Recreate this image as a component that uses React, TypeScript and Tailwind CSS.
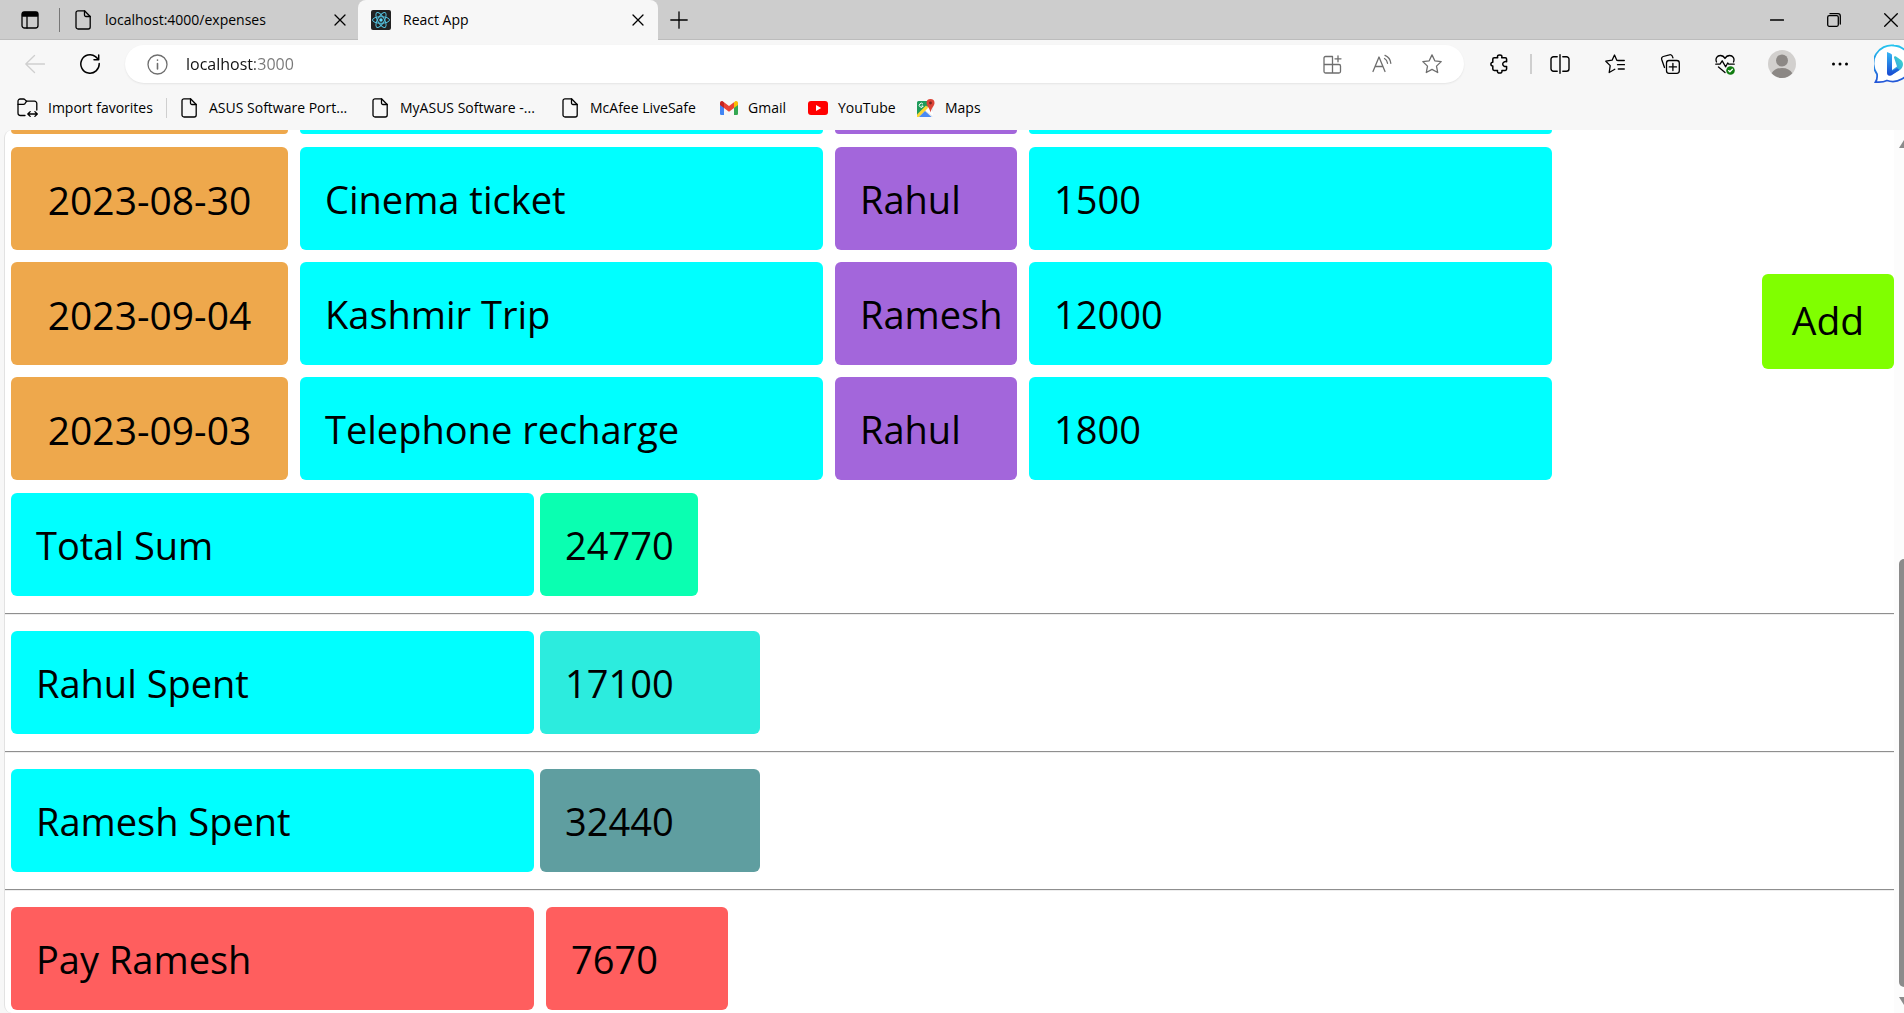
import React from "react";

type IconProps = { className?: string; children: React.ReactNode; box?: string };

function Icon({ className = "size-5", box = "0 0 20 20", children }: IconProps) {
  return (
    <svg
      viewBox={box}
      className={"shrink-0 " + className}
      fill="none"
      stroke="currentColor"
      strokeWidth="1.3"
      strokeLinecap="round"
      strokeLinejoin="round"
      aria-hidden="true"
    >
      {children}
    </svg>
  );
}

const FileIcon = () => (
  <Icon className="h-5 w-4" box="0 0 16 20">
    <path d="M3 .8h6.5L15.2 6.500V17a2 2 0 0 1-2 2H3a2 2 0 0 1-2-2V2.800a2 2 0 0 1 2-2Z" />
    <path d="M9.500 .8V5a1.500 1.500 0 0 0 1.500 1.500h4.200" />
  </Icon>
);

const CloseIcon = () => (
  <Icon className="size-3" box="0 0 12 12">
    <path d="m1 1 10 10M11 1 1 11" />
  </Icon>
);

const STAR = "m10 .9 2.800 5.900 6.400.8-4.700 4.500 1.200 6.400L10 15.400l-5.700 3.100 1.200-6.400L.8 7.600l6.400-.8Z";

const ReactLogo = () => (
  <svg viewBox="0 0 20 20" className="size-5 shrink-0" aria-hidden="true">
    <rect width="20" height="20" rx="2" fill="#222" />
    <g fill="none" stroke="#53c1de" strokeWidth="1">
      <ellipse cx="10" cy="10" rx="8.500" ry="3.300" />
      <ellipse cx="10" cy="10" rx="8.500" ry="3.300" transform="rotate(60 10 10)" />
      <ellipse cx="10" cy="10" rx="8.500" ry="3.300" transform="rotate(120 10 10)" />
    </g>
    <circle cx="10" cy="10" r="1.700" fill="#61dafb" />
  </svg>
);

const ImportIcon = () => (
  <Icon className="h-5 w-[21px]" box="0 0 21 20">
    <path d="M8 17.500H3.500a2.500 2.500 0 0 1-2.500-2.500V3.200A2.200 2.200 0 0 1 3.200 1h3.300c.6 0 1 .2 1.400.6L9.500 3.200h8a2.300 2.300 0 0 1 2.300 2.300V12" />
    <path d="M1 6.300h5.500c.6 0 1-.2 1.400-.6l1.800-2.500M11 16h9M13.200 13.600 10.800 16l2.400 2.400M17.900 13.600l2.400 2.400-2.400 2.400" />
  </Icon>
);

const GmailIcon = () => (
  <svg viewBox="0 0 18 14" className="h-3.5 w-[18px] shrink-0" aria-hidden="true">
    <path d="M0 2.500 4 5.500V14H1.300A1.300 1.300 0 0 1 0 12.700Z" fill="#4285f4" />
    <path d="M18 2.500 14 5.500V14h2.700a1.300 1.300 0 0 0 1.300-1.300Z" fill="#34a853" />
    <path d="M14 1.200 15 .4c1.300-1 3 0 3 1.600v2L14 7Z" fill="#fbbc04" />
    <path d="M4 1.200 3 .4C1.700-.6 0 .4 0 2v2l4 3Z" fill="#c5221f" />
    <path d="M4 1.200 9 5l5-3.800V7L9 10.800 4 7Z" fill="#ea4335" />
  </svg>
);

const YouTubeIcon = () => (
  <svg viewBox="0 0 20 14" className="h-3.5 w-5 shrink-0" aria-hidden="true">
    <rect width="20" height="14" rx="3" fill="#f00" />
    <path d="m8 4 5.200 3L8 10Z" fill="#fff" />
  </svg>
);

const MapsIcon = () => (
  <svg viewBox="0 0 18 19" className="h-[19px] w-[18px] shrink-0" aria-hidden="true">
    <rect y="2" width="16" height="16" rx="1.500" fill="#e8eaed" />
    <path d="M0 3.500A1.500 1.500 0 0 1 1.500 2H12v4L0 18Z" fill="#1e9b5a" />
    <path d="m0 15.500 9-9 2.500 2.500L2 18H0Z" fill="#fdd835" />
    <path d="m8 12 6.500 6H2Z" fill="#4a8af4" />
    <path d="m8.500 11.500 3-3L16 13v4Z" fill="#fff" />
    <path d="M6 5.200A2 2 0 1 0 6.200 7H4.500" fill="none" stroke="#fff" strokeWidth="1" />
    <path d="M13.500 0A4 4 0 0 0 9.500 4c0 3 3 4.500 4 9.500 1-5 4-6.500 4-9.500a4 4 0 0 0-4-4Z" fill="#db4437" />
    <circle cx="13.500" cy="4" r="1.400" fill="#7b231e" />
  </svg>
);

const BingIcon = () => (
  <svg viewBox="0 0 40 40" className="size-10 shrink-0" aria-hidden="true">
    <defs>
      <linearGradient id="bing-ring" x1="0" y1="0" x2="0" y2="1">
        <stop offset="0" stopColor="#25c4ee" />
        <stop offset="1" stopColor="#2356d8" />
      </linearGradient>
      <linearGradient id="bing-stem" x1="0" y1="0" x2="0" y2="1">
        <stop offset="0" stopColor="#35b6f5" />
        <stop offset="1" stopColor="#1747d1" />
      </linearGradient>
      <linearGradient id="bing-bowl" x1="1" y1="0" x2="0" y2="1">
        <stop offset="0" stopColor="#3fe0c8" />
        <stop offset="1" stopColor="#2a7df0" />
      </linearGradient>
    </defs>
    <path
      d="M20 1.500a18 18 0 1 1-7 35c-3 1.500-7 2-11.500 1.500 1.800-2.500 2-4.500 1.500-8A18 18 0 0 1 20 1.500Z"
      fill="#fff"
      stroke="url(#bing-ring)"
      strokeWidth="1.800"
    />
    <path d="M20 13.500c0-1 1-1.500 2-1l5 3.500c3 2.500 2.500 7-.5 9.500L17 31.500l-1-4 7-5Z" fill="url(#bing-bowl)" />
    <path d="m13 8 3.500 1.500c1 .5 1.500 1 1.500 2V27l5-3 2.500 2-8.500 5.500c-2.500 1-4-.5-4-2.500Z" fill="url(#bing-stem)" />
  </svg>
);

function IconButton({ label, className = "w-10", children }: { label: string; className?: string; children: React.ReactNode }) {
  return (
    <button type="button" aria-label={label} className={"flex h-9 shrink-0 items-center justify-center " + className}>
      {children}
    </button>
  );
}

function TabStrip() {
  return (
    <header className="flex h-10 shrink-0 items-center bg-[#cdcdcd] shadow-[inset_0_-1px_0_#bcbcbc]">
      <IconButton label="Tab actions" className="w-[59px]">
        <Icon className="size-[18px]" box="0 0 18 18">
          <rect x="1" y="1" width="16" height="16" rx="2.500" />
          <path d="M1.500 1.500h15V5h-15Z" fill="currentColor" />
          <path d="M6 5v12" />
        </Icon>
      </IconButton>
      <div className="h-6 w-px bg-[#777]" />
      <div className="flex h-10 w-[298px] items-center pr-3 pl-[15px]">
        <FileIcon />
        <span className="ml-3.5 flex-1 truncate">localhost:4000/expenses</span>
        <button type="button" aria-label="Close localhost:4000/expenses">
          <CloseIcon />
        </button>
      </div>
      <div className="z-10 flex h-10 w-[300px] items-center rounded-t-lg bg-[#f7f7f7] pr-3.5 pl-[13px]">
        <ReactLogo />
        <span className="ml-3 flex-1">React App</span>
        <button type="button" aria-label="Close React App">
          <CloseIcon />
        </button>
      </div>
      <IconButton label="New tab" className="w-[42px]">
        <Icon className="size-[18px]" box="0 0 18 18">
          <path d="M9 .8v16.400M.8 9h16.400" />
        </Icon>
      </IconButton>
      <div className="ml-auto flex">
        <IconButton label="Minimize" className="w-[57px]">
          <Icon className="size-[14px]" box="0 0 14 14">
            <path d="M.5 7h13" />
          </Icon>
        </IconButton>
        <IconButton label="Restore" className="w-[57px]">
          <Icon className="size-[14px]" box="0 0 14 14">
            <rect x=".7" y="2.700" width="10.600" height="10.600" rx="1.500" />
            <path d="M3 .7h8A2.300 2.300 0 0 1 13.300 3v8" />
          </Icon>
        </IconButton>
        <IconButton label="Close window" className="w-[42px] pl-4">
          <Icon className="size-[14px]" box="0 0 14 14">
            <path d="m.7.7 12.600 12.600M13.300.7.7 13.300" />
          </Icon>
        </IconButton>
      </div>
    </header>
  );
}

function AddressRow() {
  return (
    <div className="flex h-12 items-center">
      <IconButton label="Back" className="w-[70px] text-[#cfcfcf]">
        <Icon>
          <path d="M19.500 10H.8M9.500 1.500 .8 10l8.700 8.500" />
        </Icon>
      </IconButton>
      <IconButton label="Refresh" className="w-10">
        <Icon>
          <path strokeWidth="1.500" d="M19.200 9.500A9.200 9.200 0 1 1 15.500 2.600L18.500 5.500M18.700 1v4.700h-4.700" />
        </Icon>
      </IconButton>
      <div className="ml-[15px] flex h-[38px] flex-1 items-center rounded-full bg-white pr-[7px] pl-[22px] text-[#6e6e6e] shadow-[0_1px_2px_rgba(0,0,0,0.08)]">
        <Icon className="size-[21px]" box="0 0 21 21">
          <circle cx="10.500" cy="10.500" r="9.500" />
          <path d="M10.500 9.500v5.500M10.500 6v.3" strokeWidth="1.600" />
        </Icon>
        <input
          aria-label="Address"
          defaultValue="localhost:3000"
          className="ml-[18px] min-w-0 flex-1 bg-[linear-gradient(to_right,#111_69px,#777_69px)] bg-clip-text text-base text-transparent caret-black outline-none"
        />
        <IconButton label="Apps" className="w-[50px]">
          <Icon className="size-[19px]" box="0 0 19 19">
            <path d="M9 1.500H2.500A1.500 1.500 0 0 0 1 3v13.500A1.500 1.500 0 0 0 2.500 18H16a1.500 1.500 0 0 0 1.500-1.500V11A1.500 1.500 0 0 0 16 9.500H1M9 1.500h.5V18M15 .8v6M12 3.800h6" />
          </Icon>
        </IconButton>
        <IconButton label="Read aloud" className="w-[50px]">
          <Icon>
            <path d="m1 17.500 6-14.500 6 14.500M3.200 12.500h7.600M12.500 4.500c1.800 1 2.800 2.500 3 4.800M13 1.300c3.500 1.500 5.500 4.200 5.800 8" />
          </Icon>
        </IconButton>
        <IconButton label="Add to favorites" className="w-[50px]">
          <Icon>
            <path d={STAR} />
          </Icon>
        </IconButton>
      </div>
      <IconButton label="Extensions" className="w-[66px] pl-1.5">
        <Icon>
          <path
            strokeWidth="1.500"
            d="M4.200 3.700h3.500C7 1.800 8 .9 9.700.9s2.700.9 2 2.800h3.500c.9 0 1.400.5 1.400 1.400v2.600c-2-.4-3.900.6-3.900 2.400s1.900 2.800 3.900 2.300v2.700c0 .9-.5 1.400-1.400 1.400h-3.300c.4 1.700-.5 2.600-2.200 2.600s-2.600-.9-2.200-2.600H4.200c-.9 0-1.400-.5-1.400-1.400v-3C1.500 12 .9 11.300.9 10.100s.8-2 1.900-1.900V5.100c0-.9.5-1.400 1.400-1.400Z"
          />
        </Icon>
      </IconButton>
      <div className="h-5 w-0.5 bg-[#cfcfcf]" />
      <IconButton label="Split screen" className="w-[55px]">
        <Icon>
          <path strokeWidth="1.400" d="M10 .8v18.400M7.200 2.700H3.500a2.500 2.500 0 0 0-2.500 2.500v9.600a2.500 2.500 0 0 0 2.500 2.500h3.700M12.800 2.700h3.700A2.500 2.500 0 0 1 19 5.200v9.600a2.500 2.500 0 0 1-2.500 2.500h-3.700" />
        </Icon>
      </IconButton>
      <IconButton label="Favorites" className="w-[55px]">
        <Icon>
          <path d="M13.300 6.500 11.800 6.300 9.500 1 7.100 6.200.8 7.200l4.400 4.400L4.200 18.500l5.600-3.200M13.300 6.500h6M12.500 10.700h7M13.300 15h6" />
        </Icon>
      </IconButton>
      <IconButton label="Collections" className="w-[55px]">
        <Icon>
          <rect x="6.500" y="6.500" width="12.800" height="12.800" rx="2.500" />
          <path d="M12.900 9.300v7.200M9.300 12.900h7.200M4.500 13.500 1.700 5.500a2.400 2.400 0 0 1 1.600-3L9.400.8a2.400 2.400 0 0 1 3 1.600l.5 1.400" />
        </Icon>
      </IconButton>
      <IconButton label="Browser essentials" className="w-[55px]">
        <Icon className="h-[21px] w-5" box="0 0 20 21">
          <path d="M1.500 8C0 4.500 2.300 1.500 5.300 1.500c2 0 3.700 1 4.700 3 1-2 2.700-3 4.700-3 3 0 5.300 3 3.800 6.500M.8 10.200H5l2.200-3.400 3.500 6 2-3.800 1 1.200h5.500M3.500 13l6.500 5.500" />
          <circle cx="15.500" cy="16.500" r="4.300" fill="#107c10" stroke="none" />
          <path d="m13.600 16.600 1.300 1.200 2.500-2.600" stroke="#fff" />
        </Icon>
      </IconButton>
      <IconButton label="Profile" className="w-[60px]">
        <svg viewBox="0 0 28 28" className="size-7" aria-hidden="true">
          <circle cx="14" cy="14" r="14" fill="#d2d0ce" />
          <circle cx="14" cy="10.500" r="6" fill="#8c8885" />
          <path d="M3.700 23.300C5.500 20 9 18 14 18s8.500 2 10.300 5.300A14 14 0 0 1 14 28a14 14 0 0 1-10.300-4.700Z" fill="#8c8885" />
        </svg>
      </IconButton>
      <IconButton label="Settings and more" className="w-[55px]">
        <Icon>
          <g fill="currentColor" stroke="none">
            <circle cx="3.500" cy="10" r="1.500" />
            <circle cx="10" cy="10" r="1.500" />
            <circle cx="16.500" cy="10" r="1.500" />
          </g>
        </Icon>
      </IconButton>
      <div className="ml-[7px] w-[30px] overflow-hidden">
        <button type="button" aria-label="Bing chat" className="block w-10">
          <BingIcon />
        </button>
      </div>
    </div>
  );
}

function Bookmark({ icon, label, className = "" }: { icon: React.ReactNode; label: string; className?: string }) {
  return (
    <a href="#" className={"flex shrink-0 items-center whitespace-nowrap " + className}>
      {icon}
      {label}
    </a>
  );
}

function BookmarksBar() {
  return (
    <nav aria-label="Favorites bar" className="flex h-[42px] items-center pb-0.5 pl-[17px]">
      <Bookmark icon={<ImportIcon />} label="Import favorites" className="w-[149px] gap-2.5" />
      <div className="mr-3.5 h-5 w-px bg-[#cfcfcf]" />
      <Bookmark icon={<FileIcon />} label="ASUS Software Port..." className="w-[191px] gap-3" />
      <Bookmark icon={<FileIcon />} label="MyASUS Software -..." className="w-[190px] gap-3" />
      <Bookmark icon={<FileIcon />} label="McAfee LiveSafe" className="w-[158px] gap-3" />
      <Bookmark icon={<GmailIcon />} label="Gmail" className="w-[88px] gap-2.5" />
      <Bookmark icon={<YouTubeIcon />} label="YouTube" className="w-[109px] gap-2.5" />
      <Bookmark icon={<MapsIcon />} label="Maps" className="gap-2.5" />
    </nav>
  );
}

const expenses = [
  { date: "2023-08-30", item: "Cinema ticket", person: "Rahul", amount: 1500 },
  { date: "2023-09-04", item: "Kashmir Trip", person: "Ramesh", amount: 12000 },
  { date: "2023-09-03", item: "Telephone recharge", person: "Rahul", amount: 1800 },
];

const summary = [
  { label: "Total Sum", value: 24770, labelStyle: "bg-[#00ffff]", valueStyle: "ml-1.5 w-[158px] bg-[#0affb1]" },
  { label: "Rahul Spent", value: 17100, labelStyle: "bg-[#00ffff]", valueStyle: "ml-1.5 w-[220px] bg-[#2cecde]" },
  { label: "Ramesh Spent", value: 32440, labelStyle: "bg-[#00ffff]", valueStyle: "ml-1.5 w-[220px] bg-[#5f9ea0]" },
  { label: "Pay Ramesh", value: 7670, labelStyle: "bg-[#ff5e5e]", valueStyle: "ml-3 w-[182px] bg-[#ff5e5e]" },
];

const CELL = "flex h-[103px] items-center rounded-md px-[25px] pt-0.5 whitespace-nowrap ";

function Expenses() {
  return (
    <table className="block">
      <thead className="block pb-[13px]">
        <tr className="flex h-1 gap-3" aria-hidden="true">
          <td className="w-[277px] rounded-b-md bg-[#eea84c]" />
          <td className="w-[523px] rounded-b-md bg-[#00ffff]" />
          <td className="w-[182px] rounded-b-md bg-[#a366db]" />
          <td className="w-[523px] rounded-b-md bg-[#00ffff]" />
        </tr>
      </thead>
      <tbody className="flex flex-col gap-3">
        {expenses.map((e) => (
          <tr key={e.date} className="flex gap-3">
            <td className={CELL + "w-[277px] justify-center bg-[#eea84c] text-[39px]"}>{e.date}</td>
            <td className={CELL + "w-[523px] bg-[#00ffff]"}>{e.item}</td>
            <td className={CELL + "w-[182px] bg-[#a366db]"}>{e.person}</td>
            <td className={CELL + "w-[523px] bg-[#00ffff]"}>{e.amount}</td>
          </tr>
        ))}
      </tbody>
    </table>
  );
}

export default function App() {
  return (
    <div className="flex h-screen flex-col overflow-hidden bg-[#f7f7f7] font-['Open_Sans',sans-serif] text-sm text-black">
      <TabStrip />
      <AddressRow />
      <BookmarksBar />
      <div className="relative ml-1 flex min-h-0 flex-1 overflow-hidden rounded-l-lg border-l border-[#e2e2e2] bg-white">
        <main className="min-w-0 flex-1 text-[38px]">
          <div className="px-1.5">
            <Expenses />
          </div>
          <dl className="mt-[13px]">
            {summary.map((s, i) => (
              <React.Fragment key={s.label}>
                {i > 0 && <div className="mt-[17px] mb-4 h-0.5 border-t border-[#8f8f8f] bg-[#eee]" />}
                <div className="flex px-1.5">
                  <dt className={CELL + "w-[523px] " + s.labelStyle}>{s.label}</dt>
                  <dd className={CELL + s.valueStyle}>{s.value}</dd>
                </div>
              </React.Fragment>
            ))}
          </dl>
        </main>
        <button
          type="button"
          className="absolute top-36 right-2.5 h-[95px] w-[132px] rounded-md bg-[#80ff00] pb-1 text-[39px]"
        >
          Add
        </button>
        <div aria-hidden="true" className="flex w-2.5 flex-col items-end overflow-hidden bg-[#fcfcfc]">
          <svg viewBox="0 0 5 8" className="mt-2.5 h-2 w-[5px] shrink-0">
            <path d="M0 8 5 0v8Z" fill="#8b8b8b" />
          </svg>
          <div className="flex-[411]" />
          <div className="w-[5px] flex-[428] rounded-l-md bg-[#8b8b8b]" />
          <svg viewBox="0 0 5 8" className="mt-2.5 mb-2 h-2 w-[5px] shrink-0">
            <path d="M0 0h5v8Z" fill="#8b8b8b" />
          </svg>
        </div>
      </div>
    </div>
  );
}
